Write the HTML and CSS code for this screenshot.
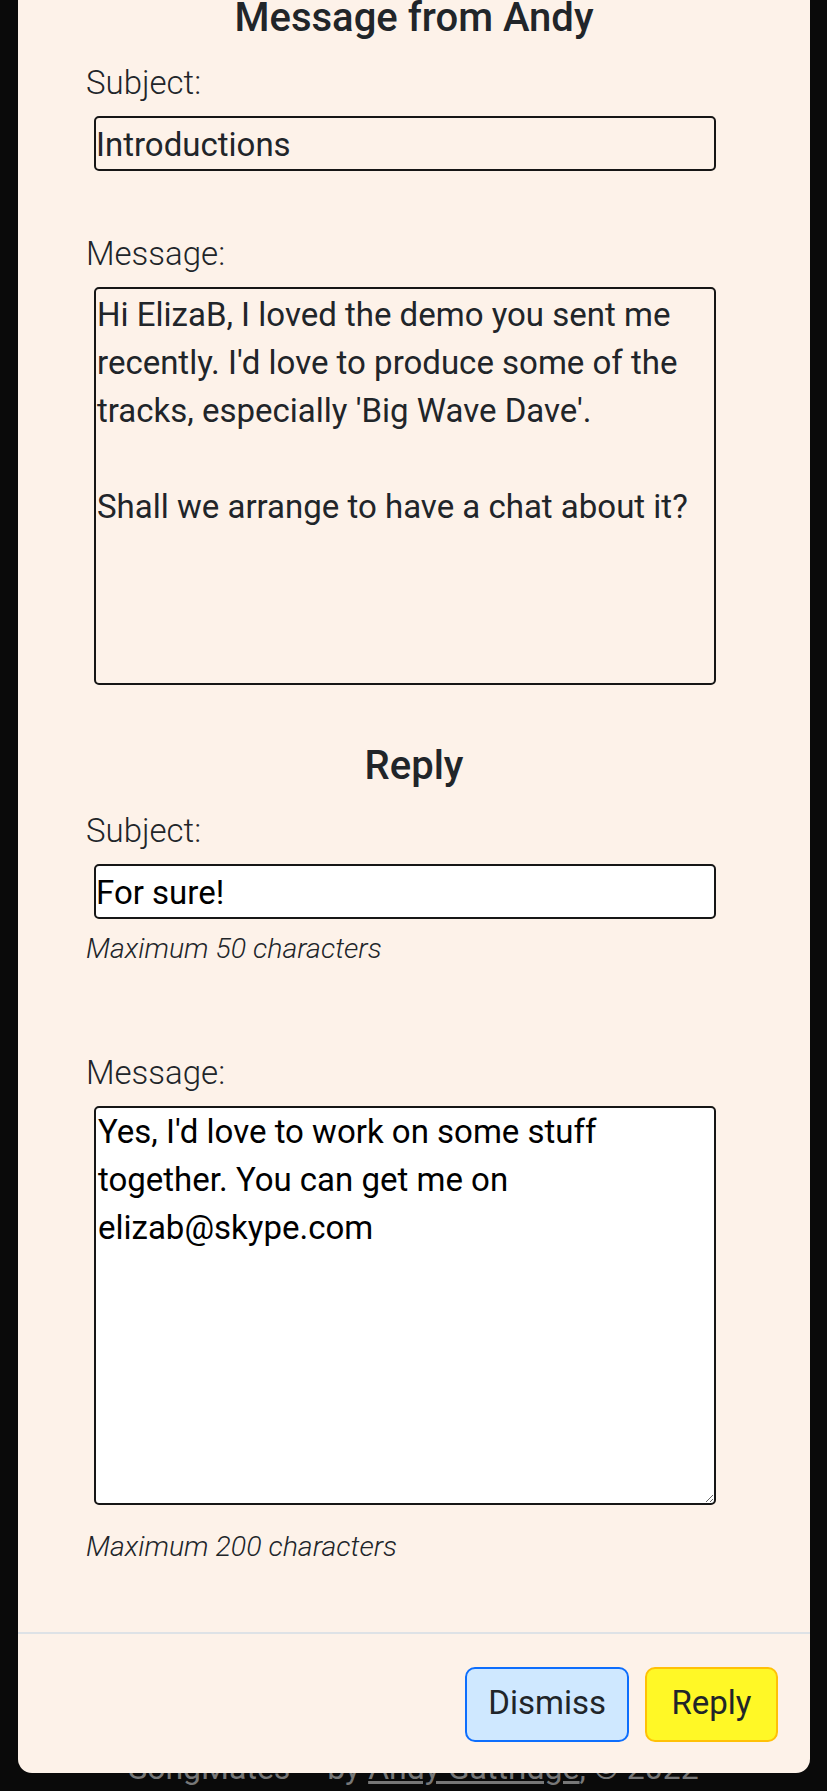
FILE: index.html
```html
<!DOCTYPE html>
<html lang="en">
<head>
<meta charset="utf-8">
<title>Message from Andy</title>
<link rel="stylesheet" href="styles.css">
</head>
<body>
<div class="modal">
  <div class="modal-body">
    <h2 class="modal-title">Message from Andy</h2>
    <div class="field field-first">
      <label class="label">Subject:</label>
      <input class="control control-readonly" type="text" value="Introductions" readonly>
    </div>
    <div class="field field-message">
      <label class="label">Message:</label>
      <div class="message-box">Hi ElizaB, I loved the demo you sent me<br>recently. I'd love to produce some of the<br>tracks, especially 'Big Wave Dave'.<br><br>Shall we arrange to have a chat about it?</div>
    </div>
    <h2 class="modal-title reply-title">Reply</h2>
    <div class="field field-first">
      <label class="label">Subject:</label>
      <input class="control control-edit" type="text" value="For sure!">
      <small class="help help-input">Maximum 50 characters</small>
    </div>
    <div class="field field-reply">
      <label class="label">Message:</label>
      <textarea class="reply-area">Yes, I'd love to work on some stuff
together. You can get me on
elizab@skype.com</textarea>
      <small class="help help-area">Maximum 200 characters</small>
    </div>
  </div>
  <div class="modal-footer">
    <button class="btn btn-dismiss" type="button">Dismiss</button>
    <button class="btn btn-reply" type="button">Reply</button>
  </div>
</div>
<footer class="page-footer">SongMates – by <a href="#" class="footer-link">Andy Gattridge</a>, © 2022</footer>
</body>
</html>
```

FILE: styles.css
```css
html, body {
  margin: 0;
  padding: 0;
}

body {
  position: relative;
  height: 1791px;
  overflow: hidden;
  background: #0a0a0a;
  font-family: Roboto, "Liberation Sans", Arial, sans-serif;
  font-size: 33px;
  line-height: 48px;
  color: #212529;
}

.modal {
  position: relative;
  z-index: 1;
  margin: 0 17px 0 18px;
  background: #fdf2e9;
  border-radius: 0 0 14px 14px;
}

.modal-body {
  padding: 0 0 64px 68px;
}

.modal-title {
  margin: 0;
  padding-right: 68px;
  text-align: center;
  font-size: 40px;
  font-weight: 500;
  line-height: 36px;
  color: #212529;
}

.reply-title {
  margin-top: 63px;
}

.field {
  display: flex;
  flex-direction: column;
  align-items: flex-start;
}

.field-first {
  margin-top: 23px;
}

.field-message {
  margin-top: 59px;
}

.field-reply {
  margin-top: 79px;
}

.label {
  display: block;
  font-weight: 300;
  line-height: 48px;
  color: #212529;
}

.control,
.message-box,
.reply-area {
  box-sizing: border-box;
  width: 622px;
  margin: 9px 0 0 8px;
  border: 2px solid #161616;
  border-radius: 5px;
  font-family: inherit;
  font-size: 33px;
  line-height: 48px;
  outline: none;
}

.control {
  height: 55px;
  padding: 2px 0 0 0;
}

.control-readonly {
  background: transparent;
  color: #212529;
}

.control-edit {
  background: #ffffff;
  color: #000000;
}

.message-box {
  height: 398px;
  padding: 2px 1px;
  color: #212529;
}

.reply-area {
  display: block;
  height: 399px;
  padding: 0 2px;
  background: #ffffff;
  color: #000000;
  resize: vertical;
  overflow: hidden;
}

.help {
  display: block;
  font-size: 28.5px;
  font-style: italic;
  font-weight: 300;
  line-height: 42px;
  color: #212529;
}

.help-input {
  margin-top: 9px;
}

.help-area {
  margin-top: 21px;
}

.modal-footer {
  display: flex;
  justify-content: flex-end;
  gap: 16px;
  padding: 33px 32px 31px;
  border-top: 2px solid #dee2e6;
}

.btn {
  box-sizing: border-box;
  height: 75px;
  padding: 10px 23px 13px;
  border: 2px solid;
  border-radius: 10px;
  font-family: inherit;
  font-size: 33px;
  line-height: 48px;
  color: #212529;
  cursor: pointer;
}

.btn-dismiss {
  padding-left: 21px;
  padding-right: 21px;
  background: #cfe8ff;
  border-color: #0d6efd;
}

.btn-reply {
  padding-left: 24.5px;
  padding-right: 24.5px;
  background: #fff826;
  border-color: #ffc107;
}

.page-footer {
  position: absolute;
  left: 0;
  right: 0;
  top: 1744px;
  text-align: center;
  font-size: 32px;
  color: #777777;
  line-height: 48px;
}

.footer-link {
  color: #777777;
  text-decoration: underline;
}
```
